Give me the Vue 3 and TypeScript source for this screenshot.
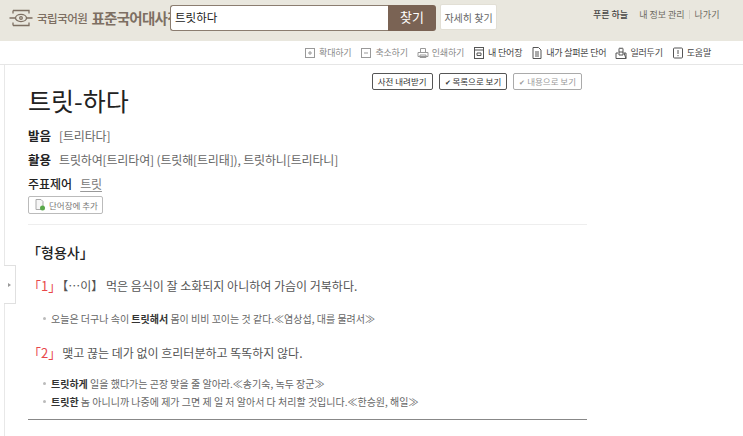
<script setup lang="ts">
interface Tool { label: string; icon: string; dark: boolean }
const tools: Tool[] = [
  { label: '확대하기', icon: 'plus', dark: false },
  { label: '축소하기', icon: 'minus', dark: false },
  { label: '인쇄하기', icon: 'print', dark: false },
  { label: '내 단어장', icon: 'book', dark: true },
  { label: '내가 살펴본 단어', icon: 'doc', dark: true },
  { label: '일러두기', icon: 'hand', dark: true },
  { label: '도움말', icon: 'help', dark: true },
]
</script>

<template>
  <div class="page">
    <header class="top">
      <div class="logo">
        <svg class="logo-icon" width="24" height="20" viewBox="0 0 24 20" fill="none" stroke="#7d6f62" stroke-width="1.3">
          <path d="M4 2.5h16v3M4 17.5h16v-3M4 2.5v3M4 14.5v3" />
          <path d="M0.5 10h6M17.5 10h6" />
          <ellipse cx="12" cy="10" rx="5.5" ry="3.6" />
          <circle cx="12" cy="10" r="1.3" />
        </svg>
        <span class="logo-a">국립국어원</span>
        <span class="logo-b">표준국어대사전</span>
      </div>
      <div class="search">
        <div class="input">트릿하다</div>
        <div class="go">찾기</div>
      </div>
      <div class="adv">자세히 찾기</div>
      <nav class="user">
        <span class="name">푸른 하늘</span>
        <span class="link">내 정보 관리</span>
        <span class="sep"></span>
        <span class="link">나가기</span>
      </nav>
    </header>

    <div class="toolbar">
      <span v-for="t in tools" :key="t.label" class="tool" :class="{ dark: t.dark }">
        <svg width="12" height="12" viewBox="0 0 12 12" fill="none" :stroke="t.dark ? '#555' : '#999'" stroke-width="1">
          <template v-if="t.icon === 'plus'">
            <rect x="1.5" y="1.5" width="9" height="9" />
            <path d="M4 6h4M6 4v4" />
          </template>
          <template v-else-if="t.icon === 'minus'">
            <rect x="1.5" y="1.5" width="9" height="9" />
            <path d="M4 6h4" />
          </template>
          <template v-else-if="t.icon === 'print'">
            <path d="M3.5 5V1.5h5V5M1 5.5h10v4H1zM3 8h6v2.5H3z" />
          </template>
          <template v-else-if="t.icon === 'book'">
            <rect x="1.5" y="0.5" width="9" height="11" />
            <path d="M1.5 3h9M4 6h4v2.5H4z" />
          </template>
          <template v-else-if="t.icon === 'doc'">
            <path d="M2 .5h5.5L10 3v8.5H2zM4 5h4M4 7h4M4 9h4" />
          </template>
          <template v-else-if="t.icon === 'hand'">
            <path d="M4 5V2a1 1 0 0 1 2 0 1 1 0 0 1 2 0v3.500M1 11.500V6h2M9 6h2v5.500zM1 11.500h10M4 5h4v3H4z" />
          </template>
          <template v-else>
            <rect x="1.500" y="1" width="9" height="10" rx="1" />
            <path d="M6 3v4M6 8v1.200" />
          </template>
        </svg>
        {{ t.label }}
      </span>
    </div>

    <main class="body">
      <div class="rail-tab"><span class="arrow"></span></div>
      <article class="entry">
        <div class="views">
          <span class="btn">사전 내려받기</span>
          <span class="btn"><b class="check">✔</b> 목록으로 보기</span>
          <span class="btn off"><b class="check">✔</b> 내용으로 보기</span>
        </div>
        <h1>트릿-하다</h1>
        <p class="meta first"><b>발음</b><span class="val gap">[트리타다]</span></p>
        <p class="meta"><b>활용</b><span class="val">트릿하여[트리타여] (트릿해[트리태]), 트릿하니[트리타니]</span></p>
        <p class="meta"><b class="thin">주표제어</b><span class="val gap ul">트릿</span></p>
        <span class="add">
          <svg width="12" height="12" viewBox="0 0 12 12" fill="none">
            <path d="M2 .5h5l2 2v8H2z" stroke="#aaa" fill="#f6f6f6" />
            <circle cx="8.500" cy="9" r="2.500" fill="#5aa84a" />
          </svg>
          단어장에 추가
        </span>
        <hr class="soft" />
        <h2>「형용사」</h2>
        <p class="def"><span class="num">「1」</span>【…이】 먹은 음식이 잘 소화되지 아니하여 가슴이 거북하다.</p>
        <ul>
          <li>오늘은 더구나 속이 <b>트릿해서</b> 몸이 비비 꼬이는 것 같다.≪염상섭, 대를 물려서≫</li>
        </ul>
        <p class="def second"><span class="num">「2」</span>맺고 끊는 데가 없이 흐리터분하고 똑똑하지 않다.</p>
        <ul class="two">
          <li><b>트릿하게</b> 일을 했다가는 곤장 맞을 줄 알아라.≪송기숙, 녹두 장군≫</li>
          <li><b>트릿한</b> 놈 아니니까 나중에 제가 그면 제 일 저 알아서 다 처리할 것입니다.≪한승원, 해일≫</li>
        </ul>
        <hr class="end" />
      </article>
    </main>
  </div>
</template>

<style>
html, body { margin: 0; background: #fff; overflow: hidden; }
</style>

<style scoped>
.page {
  width: 743px;
  height: 436px;
  overflow: hidden;
  font-family: "Noto Sans CJK KR", "Noto Sans", sans-serif;
  color: #333;
}
.top {
  height: 41px;
  background: #e9e7de;
  display: flex;
  align-items: flex-start;
  box-sizing: border-box;
  padding: 5px 0 0 9px;
}
.logo {
  display: flex;
  align-items: center;
  height: 25px;
  width: 161px;
  color: #7d6f62;
  white-space: nowrap;
  flex: none;
}
.logo-icon { flex: none; margin-right: 4px; }
.logo-a { font-size: 11.500px; font-weight: 500; letter-spacing: -0.500px; margin-right: 4px; }
.logo-b { font-size: 14.500px; font-weight: 700; letter-spacing: -0.700px; }
.search { display: flex; height: 26px; flex: none; }
.input {
  width: 218px;
  box-sizing: border-box;
  background: #fff;
  border: 1px solid #8b7d70;
  border-right: 0;
  border-radius: 3px 0 0 3px;
  font-size: 11.500px;
  line-height: 22px;
  padding-left: 4px;
  color: #222;
}
.go {
  width: 48px;
  background: #7a6354;
  color: #fff;
  border-radius: 0 3px 3px 0;
  text-align: center;
  font-size: 13px;
  line-height: 24px;
}
.adv {
  margin-left: 4px;
  margin-top: -1px;
  width: 57px;
  height: 26px;
  background: #fff;
  border: 1px solid #e2dfd5;
  box-sizing: border-box;
  border-radius: 2px;
  text-align: center;
  font-size: 10px;
  line-height: 25px;
  color: #666;
  flex: none;
}
.user {
  display: flex;
  align-items: center;
  margin-left: 96px;
  height: 16px;
  margin-top: 1px;
  font-size: 9px;
  white-space: nowrap;
  color: #6d6a62;
}
.name { color: #444; font-weight: 500; margin-right: 11px; }
.sep { width: 1px; height: 9px; background: #d3d0c6; margin: 0 5px 0 4px; }
.toolbar {
  height: 24px;
  box-sizing: border-box;
  border-bottom: 1px solid #e6e6e6;
  display: flex;
  justify-content: flex-end;
  align-items: center;
  gap: 9px;
  padding-right: 32px;
  font-size: 9px;
}
.tool { display: inline-flex; align-items: center; gap: 3px; color: #8a8a8a; white-space: nowrap; letter-spacing: -0.200px; }
.tool.dark { color: #444; }
.body {
  position: relative;
  margin-left: 4px;
  border-left: 1px solid #e8e8e8;
  height: 371px;
}
.rail-tab {
  position: absolute;
  left: -1px;
  top: 200px;
  width: 11px;
  height: 37px;
  background: #fff;
  border: 1px solid #e0e0e0;
  border-left: 0;
  display: flex;
  align-items: center;
  justify-content: center;
}
.arrow {
  width: 0;
  height: 0;
  border-left: 3px solid #999;
  border-top: 2.500px solid transparent;
  border-bottom: 2.500px solid transparent;
}
.entry {
  position: relative;
  width: 559px;
  margin-left: 23px;
  padding-top: 1px;
}
.views {
  position: absolute;
  top: 8px;
  right: 5px;
  display: flex;
  gap: 6px;
}
.btn {
  height: 17px;
  box-sizing: border-box;
  border: 1px solid #555;
  border-radius: 2px;
  padding: 0 5px;
  font-size: 8.500px;
  line-height: 15px;
  color: #333;
  white-space: nowrap;
}
.btn.off { border-color: #aaa; color: #999; }
.check { font-size: 7px; font-weight: 400; }
h1 {
  margin: 0;
  padding-top: 16px;
  font-size: 25px;
  font-weight: 400;
  line-height: 36px;
  color: #222;
}
.meta {
  margin: 0;
  height: 24px;
  display: flex;
  align-items: center;
  font-size: 12px;
  color: #666;
  white-space: nowrap;
}
.meta.first { margin-top: 5px; }
.meta b { color: #222; font-weight: 700; font-size: 12.500px; }
.meta b.thin { font-weight: 500; font-size: 12px; }
.val { margin-left: 8px; letter-spacing: -0.150px; }
.gap { margin-left: 8px; }
.ul { text-decoration: underline; text-underline-offset: 2px; text-decoration-color: #999; color: #777; }
.add {
  display: inline-flex;
  align-items: center;
  gap: 3px;
  height: 18px;
  width: 75px;
  box-sizing: border-box;
  margin-top: 1px;
  padding-left: 5px;
  border: 1px solid #bbb;
  border-radius: 2px;
  font-size: 8.500px;
  color: #777;
  white-space: nowrap;
  vertical-align: top;
}
.soft { border: 0; border-top: 1px solid #eee; margin: 5px 0 0; }
h2 {
  margin: 17px 0 0;
  font-size: 14px;
  font-weight: 500;
  line-height: 20px;
  color: #222;
  margin-left: -1px;
}
.def {
  margin: 14px 0 0;
  font-size: 12px;
  line-height: 20px;
  color: #555;
  white-space: nowrap;
}
.def.second { margin-top: 15px; }
.num { color: #e8474a; font-size: 13px; margin-right: 1px; }
ul { margin: 14px 0 0; padding: 0 0 0 14px; list-style: none; font-size: 10px; color: #666; }
ul.two { margin-top: 12px; }
li { line-height: 18px; white-space: nowrap; position: relative; padding-left: 9px; }
li::before {
  content: "";
  position: absolute;
  left: 1px;
  top: 7px;
  width: 3px;
  height: 3px;
  border-radius: 50%;
  background: #bbb;
}
li b { color: #333; font-weight: 700; }
.end { border: 0; border-top: 1px solid #888; margin: 8px 0 0; }
</style>
